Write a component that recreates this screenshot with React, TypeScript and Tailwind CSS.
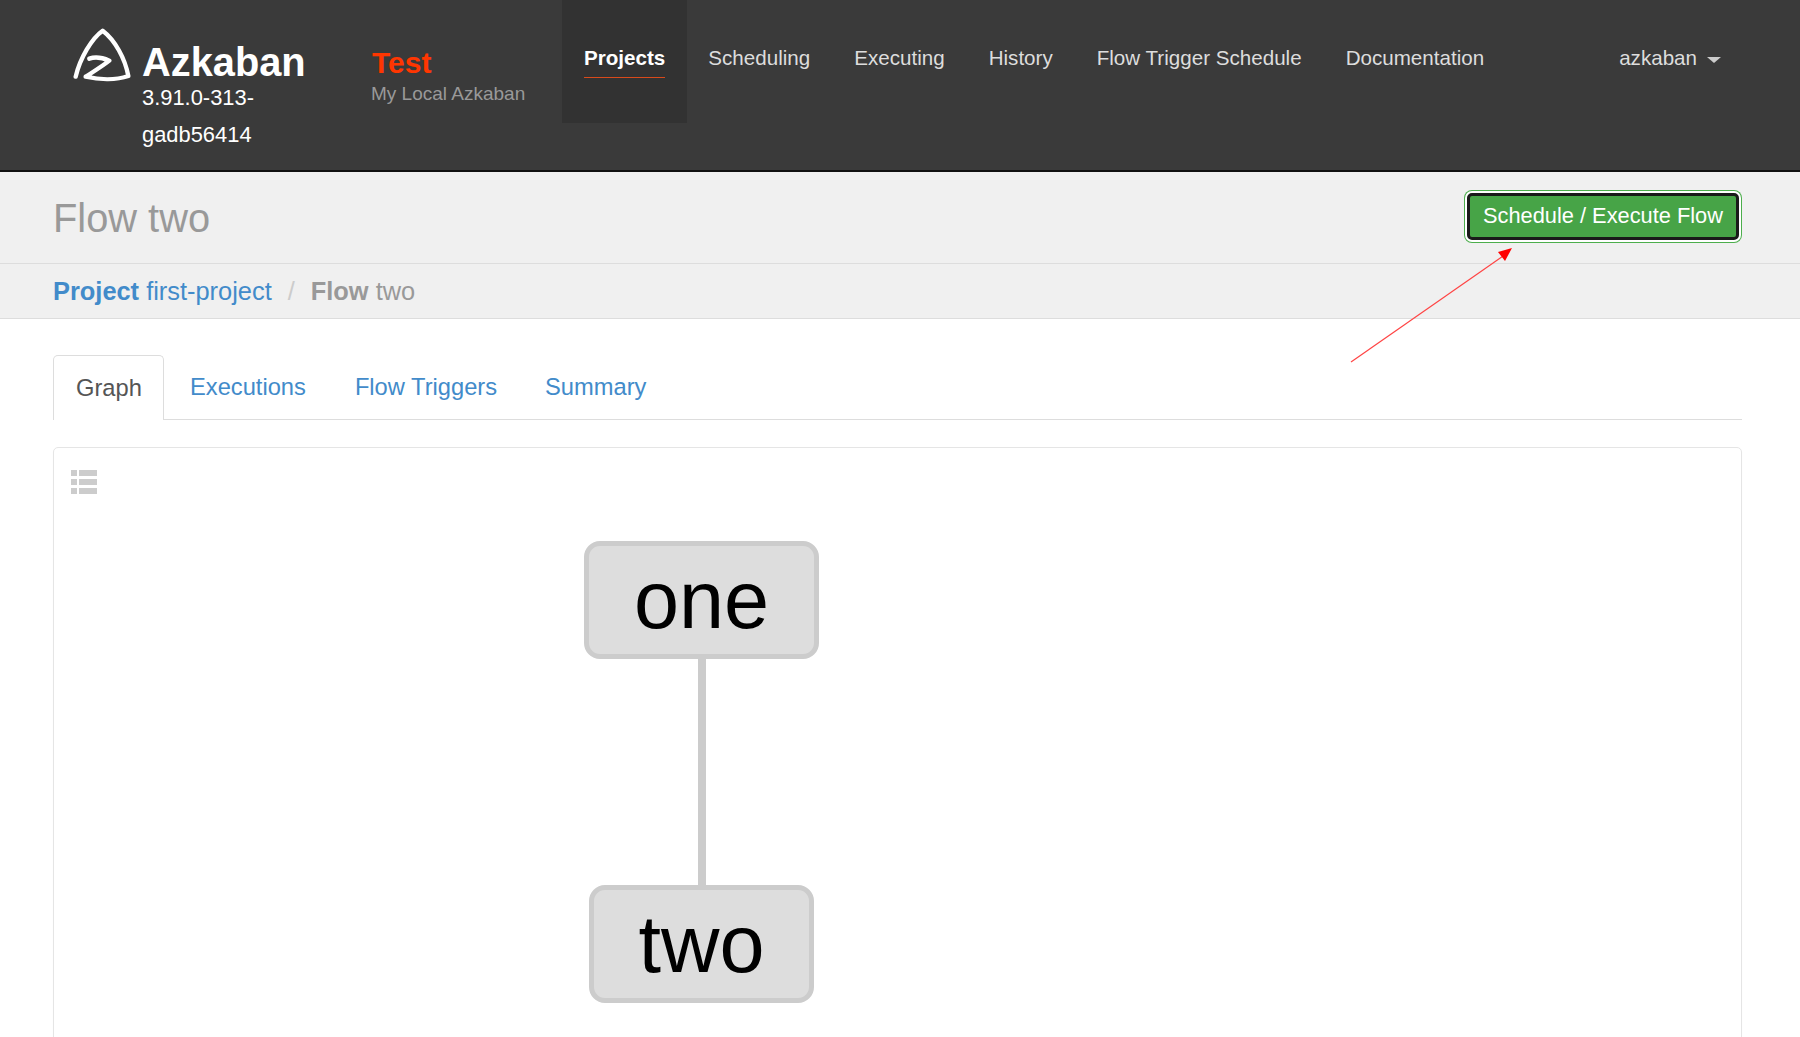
const font = "font-['Liberation_Sans',Arial,sans-serif]";

const navItems = ["Scheduling", "Executing", "History", "Flow Trigger Schedule", "Documentation"];

function Logo() {
  return (
    <svg viewBox="0 0 240 225" className="w-[80px] h-[75px] shrink-0 blur-[0.4px]" fill="none">
      <path
        d="M47 185 C60 130 95 70 128 47 C165 75 195 130 205 183 C170 195 120 195 77 185 C100 170 125 155 148 137 C125 127 105 125 88 131"
        stroke="#fff"
        strokeWidth="13"
        strokeLinejoin="round"
        strokeLinecap="round"
      />
    </svg>
  );
}

function Header() {
  return (
    <header className="h-[172px] bg-[#3a3a3a] border-b-2 border-[#111] flex">
      <div className="pl-[60px] pt-[15px] shrink-0">
        <Logo />
      </div>
      <div className="w-[232px] pl-[2px] shrink-0 text-white">
        <div className="pt-[38px] text-[39.8px] leading-[48px] font-bold">Azkaban</div>
        <div className="w-[165px] text-[21.9px] leading-[37px] -mt-[7px]">3.91.0-313-gadb56414</div>
      </div>
      <div className="w-[190px] shrink-0">
        <div className="pt-[46px] text-[30px] leading-[34px] font-bold text-[#ff3601]">Test</div>
        <div className="pt-[1px] -ml-[1px] text-[19px] leading-[26px] text-[#999]">My Local Azkaban</div>
      </div>
      <nav className="flex items-start text-[20.6px] text-[#ddd]">
        <a className="h-[123px] px-[22px] pt-[45px] bg-[#323232] text-white font-bold">
          <span className="block leading-[26px] pb-[6px] border-b border-[#d84a1b]">Projects</span>
        </a>
        <div className="flex -ml-[1px]">
          {navItems.map((item) => (
            <a key={item} className="px-[22px] pt-[45px] leading-[26px]">
              {item}
            </a>
          ))}
        </div>
      </nav>
      <div className="ml-auto mr-[79px] pt-[45px] flex items-start gap-[10px] text-[20.6px] leading-[26px] text-[#ddd]">
        azkaban
        <span className="mt-[12px] border-x-[7px] border-x-transparent border-t-[6px] border-t-[#ccc]" />
      </div>
    </header>
  );
}

function PageHeader() {
  return (
    <div className="bg-[#f0f0f0] border-b border-[#ddd]">
      <div className="h-[92px] border-b border-[#ddd] pl-[53px] pr-[61px] flex justify-between">
        <h1 className="pt-[24px] text-[39.8px] leading-[44px] text-[#999]">Flow two</h1>
        <button className="mt-[21px] h-[47px] w-[272px] rounded-[5px] border-[3px] border-[#1a1a1a] bg-[#47a447] text-white text-[21.8px] shadow-[0_0_0_2px_#fff,0_0_0_3px_#4cae4c]">
          Schedule / Execute Flow
        </button>
      </div>
      <div className="h-[54px] pl-[53px] flex items-center text-[25.4px] text-[#999]">
        <span className="text-[#428bca]">
          <b>Project</b> first-project
        </span>
        <span className="mx-[16px] text-[#ccc]">/</span>
        <span>
          <b>Flow</b> two
        </span>
      </div>
    </div>
  );
}

function Tabs() {
  return (
    <div className="flex h-[65px] border-b border-[#ddd] text-[23.7px] text-[#428bca]">
      <a className="h-[65px] w-[111px] pl-[22px] pt-[16px] leading-[32px] border border-b-0 border-[#ddd] rounded-t-[5px] bg-white text-[#555]">
        Graph
      </a>
      <a className="ml-[3px] px-[23px] pt-[16px] leading-[32px]">Executions</a>
      <a className="ml-[3px] px-[23px] pt-[16px] leading-[32px]">Flow Triggers</a>
      <a className="ml-[2px] px-[23px] pt-[16px] leading-[32px]">Summary</a>
    </div>
  );
}

function Node({ label, width }: { label: string; width: string }) {
  return (
    <div className={`${width} h-[118px] shrink-0 rounded-[16px] border-[5px] border-[#ccc] bg-[#ddd] flex items-center justify-center pt-[1px] text-[81px] text-black`}>
      {label}
    </div>
  );
}

function GraphPanel() {
  return (
    <div className="mt-[27px] h-[700px] border border-[#e5e5e5] rounded-[5px] shadow-[0_1px_1px_rgba(0,0,0,0.05)] pl-[17px] pt-[22px]">
      <svg viewBox="0 0 26 24" className="w-[26px] h-[24px] block" fill="#ccc">
        <rect x="0" y="0" width="6" height="6" />
        <rect x="8" y="0" width="18" height="6" />
        <rect x="0" y="9" width="6" height="6" />
        <rect x="8" y="9" width="18" height="6" />
        <rect x="0" y="18" width="6" height="6" />
        <rect x="8" y="18" width="18" height="6" />
      </svg>
      <div className="ml-[513px] mt-[47px] w-[235px] flex flex-col items-center">
        <Node label="one" width="w-[235px]" />
        <div className="w-[8px] h-[226px] bg-[#ccc]" />
        <Node label="two" width="w-[225px]" />
      </div>
    </div>
  );
}

export default function App() {
  return (
    <div className={`${font} relative h-[1037px] overflow-hidden bg-white`}>
      <Header />
      <PageHeader />
      <main className="pr-[58px] pl-[53px] pt-[36px]">
        <Tabs />
        <GraphPanel />
      </main>
      {/* red annotation arrow drawn on top of the screenshot */}
      <svg className="absolute left-[1340px] top-[240px] w-[180px] h-[130px]" viewBox="0 0 180 130" fill="none">
        <line x1="11" y1="122" x2="166" y2="14" stroke="#f44" strokeWidth="1.2" />
        <polygon points="172,8 158,12 165,21" fill="#f00" />
      </svg>
    </div>
  );
}
